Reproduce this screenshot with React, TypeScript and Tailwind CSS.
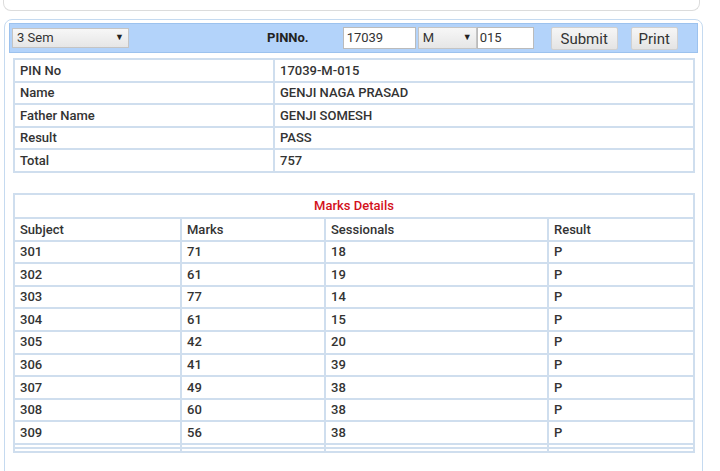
import React from "react";

const info: [string, string][] = [
  ["PIN No", "17039-M-015"],
  ["Name", "GENJI NAGA PRASAD"],
  ["Father Name", "GENJI SOMESH"],
  ["Result", "PASS"],
  ["Total", "757"],
];

const marks: [string, string, string, string][] = [
  ["301", "71", "18", "P"],
  ["302", "61", "19", "P"],
  ["303", "77", "14", "P"],
  ["304", "61", "15", "P"],
  ["305", "42", "20", "P"],
  ["306", "41", "39", "P"],
  ["307", "49", "38", "P"],
  ["308", "60", "38", "P"],
  ["309", "56", "38", "P"],
];

const cell = "border-2 border-[#cfdeee] px-[5px] h-[22.6px] align-middle";

const FakeSelect = ({ value, className }: { value: string; className: string }) => (
  <div
    className={`flex items-center justify-between h-[20px] px-[4px] border border-[#c4c4c4] bg-gradient-to-b from-[#f7f7f7] to-[#e6e6e6] text-[13px] text-[#333] ${className}`}
  >
    <span>{value}</span>
    <span className="text-[9px] text-[#222]">▼</span>
  </div>
);

const App = () => {
  return (
    <div className="w-[720px] h-[471px] overflow-hidden bg-white font-['Roboto','Liberation_Sans',sans-serif]">
      <div className="ml-[3px] w-[697px] h-[11px] border-x border-b border-[#dcdcdc] rounded-b-[8px]" />

      <div className="mt-[8px] ml-[4px] w-[699px] h-[460px] border border-[#c5daf0] rounded-t-[8px] pt-[3px] px-[4px]">
        {/* toolbar */}
        <div className="flex items-center h-[30px] bg-[#b3d3fa] border border-[#9cc2ee]">
          <FakeSelect value="3 Sem" className="ml-[2px] w-[117px]" />
          <span className="ml-[138px] text-[13px] font-bold text-[#222]">PINNo.</span>
          <div className="ml-[34px] w-[73px] h-[22px] bg-white border border-[#bbb] px-[3px] flex items-center text-[13px] text-[#333]">
            17039
          </div>
          <FakeSelect value="M" className="ml-[2px] w-[59px] h-[22px]" />
          <div className="w-[57px] h-[22px] bg-white border border-[#bbb] px-[2px] flex items-center text-[13px] text-[#333]">
            015
          </div>
          <button className="ml-[17px] w-[67px] h-[23px] border border-[#d0d0d0] rounded-[2px] bg-gradient-to-b from-[#f6f6f6] to-[#e4e4e4] text-[15px] text-[#333]">
            Submit
          </button>
          <button className="ml-[13px] w-[47px] h-[23px] border border-[#d0d0d0] rounded-[2px] bg-gradient-to-b from-[#f6f6f6] to-[#e4e4e4] text-[15px] text-[#333]">
            Print
          </button>
        </div>

        {/* student info */}
        <table className="mt-[5px] ml-[4px] w-[682px] border-collapse table-fixed text-[13px] font-medium text-[#333]">
          <colgroup>
            <col className="w-[260px]" />
            <col />
          </colgroup>
          <tbody>
            {info.map(([k, v]) => (
              <tr key={k}>
                <td className={cell}>{k}</td>
                <td className={cell}>{v}</td>
              </tr>
            ))}
          </tbody>
        </table>

        {/* marks */}
        <table className="mt-[20px] ml-[4px] w-[682px] border-collapse table-fixed text-[13px] font-medium text-[#333]">
          <colgroup>
            <col className="w-[167px]" />
            <col className="w-[144px]" />
            <col className="w-[223px]" />
            <col />
          </colgroup>
          <tbody>
            <tr>
              <td colSpan={4} className={`${cell} h-[24px] text-center text-[#d3121b]`}>
                Marks Details
              </td>
            </tr>
            <tr>
              <td className={cell}>Subject</td>
              <td className={cell}>Marks</td>
              <td className={cell}>Sessionals</td>
              <td className={cell}>Result</td>
            </tr>
            {marks.map((r) => (
              <tr key={r[0]}>
                {r.map((c, i) => (
                  <td key={i} className={cell}>
                    {c}
                  </td>
                ))}
              </tr>
            ))}
            <tr>
              {[0, 1, 2, 3].map((i) => (
                <td key={i} className="border-2 border-[#cfdeee] h-[4px] p-0" />
              ))}
            </tr>
            <tr>
              {[0, 1, 2, 3].map((i) => (
                <td key={i} className="border-2 border-[#cfdeee] h-[4px] p-0" />
              ))}
            </tr>
          </tbody>
        </table>
      </div>
    </div>
  );
};

export default App;
